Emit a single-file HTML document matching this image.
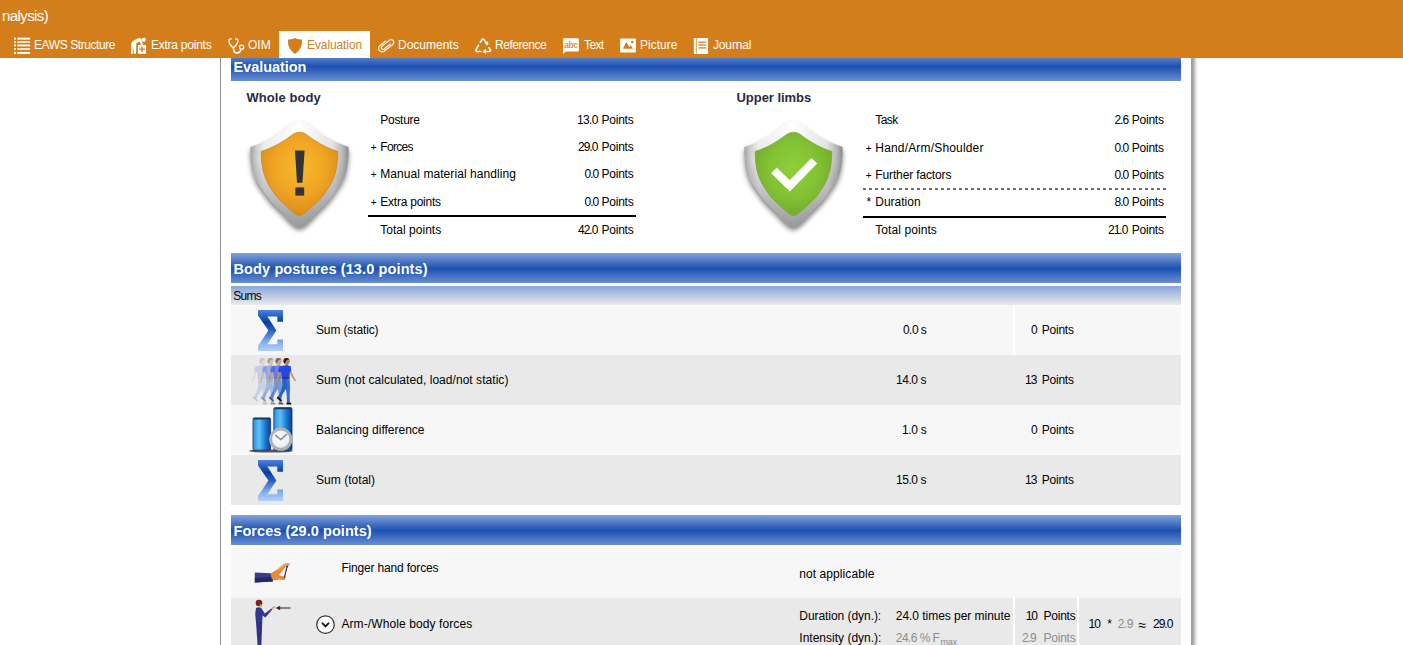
<!DOCTYPE html>
<html><head><meta charset="utf-8"><title>EAWS Evaluation</title>
<style>
html,body{margin:0;padding:0;background:#fff;}
body{width:1403px;height:645px;overflow:hidden;position:relative;font-family:"Liberation Sans", sans-serif;}
.t{position:absolute;white-space:pre;font-family:"Liberation Sans", sans-serif;}
.b{position:absolute;}
.hdr{position:absolute;left:231px;width:950px;background:linear-gradient(to bottom,#82a2da 0%,#1c50b2 52%,#6a8fd0 100%);}
.row{position:absolute;left:231px;width:950px;height:50px;}
svg{position:absolute;overflow:visible}
</style></head><body>
<!-- top orange bar -->
<div class="b" style="left:0;top:0;width:1403px;height:58px;background:#d47e1b"></div>
<div class="b" style="left:279px;top:31px;width:91px;height:27px;background:#fff"></div>
<!-- panel borders -->
<div class="b" style="left:220px;top:58px;width:1px;height:587px;background:#8e8e8e"></div>
<div class="b" style="left:1191px;top:58px;width:7px;height:587px;background:linear-gradient(to right,#9c9c9c 0%,#a6a6a6 30%,#d8d8d8 60%,#fff 100%)"></div>
<!-- headers -->
<div class="b" style="left:231px;top:58px;width:950px;height:23px;overflow:hidden"><div class="hdr" style="left:0;top:-7px;height:30px"></div></div>
<div class="hdr" style="top:253px;height:30px"></div>
<div class="hdr" style="top:515px;height:30px"></div>
<div class="b" style="left:231px;top:286px;width:950px;height:19px;background:linear-gradient(to bottom,#89a5d9,#eaeaea)"></div>
<!-- rows -->
<div class="row" style="top:305px;background:#f7f7f7"></div>
<div class="row" style="top:355px;background:#e9e9e9"></div>
<div class="row" style="top:405px;background:#f7f7f7"></div>
<div class="row" style="top:455px;background:#e9e9e9"></div>
<div class="row" style="top:548px;background:#f7f7f7"></div>
<div class="row" style="top:598px;height:47px;background:#e9e9e9"></div>
<div class="b" style="left:1013px;top:305px;width:2px;height:50px;background:#fff"></div>
<div class="b" style="left:1013px;top:598px;width:2px;height:47px;background:#fff"></div>
<div class="b" style="left:1077px;top:598px;width:2px;height:47px;background:#fff"></div>
<!-- eval lines -->
<div class="b" style="left:368px;top:215px;width:268px;height:2px;background:#000"></div>
<div class="b" style="left:863px;top:216px;width:303px;height:2px;background:#000"></div>
<div class="b" style="left:863px;top:188px;width:303px;height:2px;background:repeating-linear-gradient(to right,#6e6e6e 0,#6e6e6e 3px,transparent 3px,transparent 6px)"></div>
<!-- tab icons -->
<svg style="left:10px;top:34px" width="24" height="24" viewBox="0 0 24 24">
 <g fill="#fff"><rect x="4" y="3.7" width="2" height="1.9"/><rect x="4" y="10.5" width="2" height="1.9"/><rect x="4" y="17.9" width="2" height="2"/>
 <rect x="7.3" y="3.7" width="12.8" height="1.9"/><rect x="7.3" y="10.5" width="12.8" height="1.9"/><rect x="7.3" y="17.9" width="12.8" height="2"/></g>
 <g fill="#f8e3cb"><rect x="4" y="7" width="2" height="2"/><rect x="4" y="14" width="2" height="2"/><rect x="7.3" y="7" width="12.8" height="2"/><rect x="7.3" y="14" width="12.8" height="2"/></g>
</svg>
<svg style="left:126px;top:34px" width="24" height="24" viewBox="0 0 24 24">
 <circle cx="17.9" cy="5.8" r="2.1" fill="#fff"/>
 <path d="M5,19.8 L5.3,10 Q5.6,7.2 8,6.2 L13.2,4 Q14.8,3.6 15.3,5 L17,11 L15.3,11 L13.6,7.6 L10.3,9.3 L10,19.8 L8,19.8 L7.6,13 L7,19.8 Z" fill="#fff"/>
 <rect x="11.9" y="11" width="8.2" height="8.8" rx="0.8" fill="#fff"/>
 <path d="M13.2,14.5 h2 v-1.9 h1.6 v1.9 h2 v1.6 h-2 v1.9 h-1.6 v-1.9 h-2 Z" fill="#d8883a"/>
</svg>
<svg style="left:224px;top:34px" width="24" height="24" viewBox="0 0 24 24" fill="none" stroke="#fff" stroke-width="1.4" stroke-linecap="round">
 <path d="M7.4,4.9 Q4.6,4.6 4.9,7.2 Q5.4,11.2 9.3,13.8 Q13.4,10.8 13.9,6.8 Q14.1,4.6 11.6,4.9"/>
 <path d="M9.3,13.8 Q9.9,19.3 13.3,19 Q16.4,18.6 17,15.4"/>
 <circle cx="17.6" cy="13.2" r="2.1" stroke-width="1.3"/>
</svg>
<svg style="left:282px;top:34px" width="24" height="24" viewBox="0 0 24 24">
 <path d="M13,3.9 Q10,5.7 6,5.6 L6,9 Q6.5,15.5 13,19.9 Q19.5,15.5 20,9 L20,5.6 Q16,5.7 13,3.9 Z" fill="#d47e1b"/>
</svg>
<svg style="left:374px;top:34px" width="24" height="24" viewBox="0 0 24 24" fill="none" stroke="#fdf3e6" stroke-width="1.5" stroke-linecap="round">
 <g transform="translate(12.1,11.2) rotate(-38) scale(0.85)">
  <path d="M2.5,-4.2 L-5.8,-4.2 A4.2,4.2 0 0 0 -5.8,4.2 L6.6,4.2 A3.2,3.2 0 0 0 6.6,-2.2 L-4.6,-2.2 A2.1,2.1 0 0 0 -4.6,2 L4.8,2"/>
 </g>
</svg>
<svg style="left:471px;top:34px" width="24" height="24" viewBox="0 0 24 24" fill="none" stroke="#fff" stroke-width="1.6" stroke-linecap="round" stroke-linejoin="round">
 <path d="M9.3,8.3 L11,5.6 Q12,4.6 13,5.6 L15.8,9.8"/>
 <path d="M14.6,9.6 L16.8,11 L16.7,8.2 Z" fill="#fff" stroke-width="0.8"/>
 <path d="M7.6,11.2 L4.9,15.8 Q4.5,17.4 6,17.5 L10,17.5"/>
 <path d="M18,13.6 L19.4,16 Q19.9,17.4 18.4,17.5 L13.6,17.5"/>
 <path d="M14.2,15.8 L12.2,17.5 L14.2,19.2 Z" fill="#fff" stroke-width="0.8"/>
</svg>
<svg style="left:558px;top:34px" width="24" height="24" viewBox="0 0 24 24">
 <path d="M6,4.3 H19.9 Q20.9,4.3 20.9,5.3 V16.5 Q20.9,17.5 19.9,17.5 H7.8 L5.2,20.2 L5,5.3 Q5,4.3 6,4.3 Z" fill="#fff"/>
 <text x="12.9" y="13.6" font-family="Liberation Sans, sans-serif" font-size="8.4" font-weight="700" fill="#dc9040" text-anchor="middle" letter-spacing="-0.4">abc</text>
</svg>
<svg style="left:616px;top:34px" width="24" height="24" viewBox="0 0 24 24">
 <rect x="4.1" y="4.5" width="15.8" height="14.1" rx="1" fill="#fff"/>
 <path d="M6.8,14.7 L10.4,8 L13.3,13 L14.5,11 L17,14.7 Z" fill="#d47e1b"/>
 <circle cx="16.3" cy="8" r="1.3" fill="#d47e1b"/>
</svg>
<svg style="left:689px;top:34px" width="24" height="24" viewBox="0 0 24 24">
 <rect x="4.8" y="3.9" width="14.3" height="16" rx="1" fill="#fff"/>
 <rect x="7" y="3.9" width="0.9" height="16" fill="#e4a55e"/>
 <g fill="#e09a4b"><rect x="9.3" y="7.4" width="8" height="1.6"/><rect x="9.3" y="10.2" width="8" height="1.6"/><rect x="9.3" y="13.1" width="8" height="1.6"/></g>
</svg>
<!-- big shields -->
<svg width="0" height="0" style="left:0;top:0">
 <defs>
  <linearGradient id="rim" x1="0" y1="0" x2="1" y2="1">
   <stop offset="0" stop-color="#ffffff"/><stop offset="0.35" stop-color="#ededed"/><stop offset="0.7" stop-color="#c9c9c9"/><stop offset="1" stop-color="#9a9a9a"/>
  </linearGradient>
  <linearGradient id="rimedge" x1="0" y1="0" x2="1" y2="0">
   <stop offset="0" stop-color="#a2a2a2"/><stop offset="0.06" stop-color="#cdcdcd"/><stop offset="0.14" stop-color="#ececec"/><stop offset="0.5" stop-color="#ffffff"/><stop offset="0.84" stop-color="#e2e2e2"/><stop offset="0.94" stop-color="#b6b6b6"/><stop offset="1" stop-color="#8a8a8a"/>
  </linearGradient>
  <radialGradient id="gold" cx="0.5" cy="0.42" r="0.6">
   <stop offset="0" stop-color="#f8b92c"/><stop offset="0.55" stop-color="#f0a524"/><stop offset="1" stop-color="#d98a18"/>
  </radialGradient>
  <radialGradient id="green" cx="0.5" cy="0.45" r="0.6">
   <stop offset="0" stop-color="#8fd03a"/><stop offset="0.55" stop-color="#82c234"/><stop offset="1" stop-color="#6fa82b"/>
  </radialGradient>
  <filter id="sh" x="-30%" y="-30%" width="160%" height="160%"><feGaussianBlur stdDeviation="2.6"/></filter>
  <linearGradient id="sig" x1="0" y1="0" x2="0" y2="1">
   <stop offset="0" stop-color="#4d84de"/><stop offset="0.12" stop-color="#2d66c8"/><stop offset="0.3" stop-color="#0b3d9e"/><stop offset="0.5" stop-color="#2a5fc0"/><stop offset="0.75" stop-color="#7aa7ec"/><stop offset="1" stop-color="#b3d0fa"/>
  </linearGradient>
  <linearGradient id="bar" x1="0" y1="0" x2="1" y2="0">
   <stop offset="0" stop-color="#2f8fdc"/><stop offset="0.35" stop-color="#5fc0f6"/><stop offset="0.7" stop-color="#1a78d0"/><stop offset="1" stop-color="#0a3f98"/>
  </linearGradient>
  <radialGradient id="clk" cx="0.45" cy="0.4" r="0.6"><stop offset="0" stop-color="#ffffff"/><stop offset="0.8" stop-color="#eef0f3"/><stop offset="1" stop-color="#d5d8dc"/></radialGradient>
  <linearGradient id="rimv" x1="0" y1="0" x2="0" y2="1">
   <stop offset="0" stop-color="#000" stop-opacity="0"/><stop offset="0.38" stop-color="#000" stop-opacity="0"/><stop offset="1" stop-color="#000" stop-opacity="0.4"/>
  </linearGradient>
  <g id="shield">
   <path d="M49.5,0.3 C45,0.3 41,3 37,6 C30,12 18,20 0.4,25.9 C0.2,33 1,41 2.4,48.4 C4.5,57 8,63 12.6,68.9 C17,76 23,83 30,89.4 C35,94 44,105.7 49.5,105.7 C55,105.7 64,94 69,89.4 C76,83 82,76 86.4,68.9 C91,63 94.5,57 96.6,48.4 C98,41 98.8,33 98.6,25.9 C81,20 69,12 62,6 C58,3 54,0.3 49.5,0.3 Z" fill="#000" opacity="0.5" filter="url(#sh)" transform="translate(0,3.5)"/>
   <path d="M49.5,0.3 C45,0.3 41,3 37,6 C30,12 18,20 0.4,25.9 C0.2,33 1,41 2.4,48.4 C4.5,57 8,63 12.6,68.9 C17,76 23,83 30,89.4 C35,94 44,105.7 49.5,105.7 C55,105.7 64,94 69,89.4 C76,83 82,76 86.4,68.9 C91,63 94.5,57 96.6,48.4 C98,41 98.8,33 98.6,25.9 C81,20 69,12 62,6 C58,3 54,0.3 49.5,0.3 Z" fill="url(#rimedge)"/>
   <path d="M49.5,0.3 C45,0.3 41,3 37,6 C30,12 18,20 0.4,25.9 C0.2,33 1,41 2.4,48.4 C4.5,57 8,63 12.6,68.9 C17,76 23,83 30,89.4 C35,94 44,105.7 49.5,105.7 C55,105.7 64,94 69,89.4 C76,83 82,76 86.4,68.9 C91,63 94.5,57 96.6,48.4 C98,41 98.8,33 98.6,25.9 C81,20 69,12 62,6 C58,3 54,0.3 49.5,0.3 Z" fill="url(#rimv)"/>
  </g>
  <path id="shin" d="M49.5,11.2 C45.5,11.2 42.5,13.5 38.5,16.5 C31.5,21.5 22.5,27 11.2,30.4 C11.2,37 11.7,43 12.8,48.4 C14.7,57 17.7,63 22,68.9 C25.2,74 29.2,79 34.3,83.2 C38.5,87 45.5,94.5 49.5,94.5 C53.5,94.5 60.5,87 64.7,83.2 C69.8,79 73.8,74 77,68.9 C81.3,63 84.3,57 86.2,48.4 C87.3,43 87.8,37 87.8,30.4 C76.5,27 67.5,21.5 60.5,16.5 C56.5,13.5 53.5,11.2 49.5,11.2 Z"/>
  <path id="sigma" d="M0,0 H25 V11.8 H19.3 V6.6 H9.4 L18.4,20.5 L9.4,34.2 H19.3 V29.4 H25 V41 H0 V36 L10.4,20.5 L0,5.4 Z"/>
 </defs>
</svg>
<svg style="left:250px;top:121px" width="99" height="112" viewBox="0 0 99 112">
 <use href="#shield"/><use href="#shin" fill="url(#gold)" stroke="#c98a2a" stroke-width="0.8"/>
 <path d="M45,29.6 H54.6 L52.5,61.7 H47 Z" fill="#333"/><rect x="45.4" y="66.4" width="8.8" height="8.2" fill="#333"/>
</svg>
<svg style="left:744px;top:121px" width="99" height="112" viewBox="0 0 99 112">
 <use href="#shield"/><use href="#shin" fill="url(#green)" stroke="#79a83e" stroke-width="0.8"/>
 <path d="M30,49.4 L45.8,64.8 L70.3,39.8" fill="none" stroke="#fff" stroke-width="8"/>
</svg>
<!-- sigma icons -->
<svg style="left:258px;top:310px" width="25" height="41" viewBox="0 0 25 41"><use href="#sigma" fill="url(#sig)"/></svg>
<svg style="left:258px;top:460px" width="25" height="41" viewBox="0 0 25 41"><use href="#sigma" fill="url(#sig)"/></svg>
<!-- walking men -->
<svg style="left:246px;top:353px" width="56" height="52" viewBox="0 0 56 52">
 <defs><g id="man">
  <path d="M-1.5,17.2 L3.1,17.2 L3.7,26 L3.3,34 L3.5,41.6 L0.6,41.6 L0.3,33 L-0.8,26 Z" fill="#2f6fd6"/>
  <path d="M-4.4,17.2 L0.2,17.2 L0.6,26 L-3.4,32.2 L-6.2,37.8 L-8.8,36 L-5.6,30.2 L-4.2,25 Z" fill="#2a5fc4"/>
  <path d="M-7.4,10.4 L-9.6,17 L-10.5,21.4 L-9.3,21.8 L-7.8,17 L-6,11 Z" fill="#c88f63"/>
  <path d="M3.6,10.2 L4.8,10 L7.2,15.4 L9.6,19.2 L8.6,20.2 L5.8,16.4 L3.8,12.2 Z" fill="#c88f63"/>
  <rect x="-0.8" y="2.4" width="2.6" height="3" fill="#b07a52"/>
  <path d="M-7,5.2 L-1.2,4 L4.3,4.8 L4.9,10.2 L3.5,10.5 L3.1,17 L-4.5,17 L-5.3,10.6 L-7.3,11.4 L-8.2,9 Z" fill="#2349dc"/>
  <rect x="-4.5" y="16.4" width="7.6" height="1.1" fill="#1a2258"/>
  <circle cx="0.2" cy="0" r="3.1" fill="#b9835a"/>
  <path d="M-2.9,0.6 Q-3.4,-3.4 0.2,-3.3 Q2.6,-3.2 3,-1.6 Q0.4,-2 -0.6,0 Q-1,1.6 -1.6,2.4 Q-2.6,2 -2.9,0.6 Z" fill="#2a1a14"/>
  <path d="M0.2,41.3 L3.7,41.3 L5,42.4 L5,43.3 L0.2,43.3 Z" fill="#0a0a0a"/>
  <path d="M-9.2,35.4 L-6,37.6 L-4.3,39.8 L-5.4,40.2 L-9.5,37 Z" fill="#0a0a0a"/>
 </g></defs>
 <use href="#man" x="16.4" y="8.2" opacity="0.17"/><use href="#man" x="24.4" y="8.2" opacity="0.36"/><use href="#man" x="32.4" y="8.2" opacity="0.62"/><use href="#man" x="40.4" y="8.2"/>
</svg>
<!-- balance icon -->
<svg style="left:248px;top:405px" width="50" height="50" viewBox="0 0 50 50">
 <ellipse cx="23" cy="46" rx="22" ry="1.6" fill="#222" opacity="0.75"/>
 <rect x="25.8" y="2.8" width="18.2" height="42.5" rx="1.5" fill="url(#bar)" stroke="#14305e" stroke-width="0.8"/>
 <rect x="5" y="13" width="17.6" height="32.2" rx="1.5" fill="url(#bar)" stroke="#14305e" stroke-width="0.8"/>
 <rect x="25.8" y="2.6" width="18.2" height="1.6" rx="0.8" fill="#173766"/><rect x="5" y="12.8" width="17.6" height="1.6" rx="0.8" fill="#173766"/>
 <circle cx="32.8" cy="34.2" r="11.6" fill="#aeb3b9"/>
 <circle cx="32.8" cy="34.2" r="9.2" fill="url(#clk)" stroke="#8e949b" stroke-width="0.6"/>
 <path d="M32.8,34.6 L27.6,30.4 M32.8,34.6 L38.6,29.4" stroke="#8a8f96" stroke-width="1.5" fill="none" stroke-linecap="round"/>
</svg>
<!-- hand icon -->
<svg style="left:250px;top:558px" width="46" height="30" viewBox="0 0 46 30">
 <path d="M4.8,14.6 L20.5,15.2 Q23,16 23.2,19.5 L22.8,23.6 L4.8,24.4 Z" fill="#3b3c8e"/>
 <path d="M4.8,20 L22.9,19 L22.8,23.6 L4.8,24.4 Z" fill="#26276a"/>
 <path d="M20.6,15.4 L27,11.4 L33,6.4 Q36.5,4.6 39.8,5.6 L39.4,7.4 L36.4,7.8 L33.4,11.4 L29,17 L33.6,18.8 L35.4,20.6 L34.6,22 L29,21.4 L24.4,22.6 L21.8,21 Z" fill="#e48b3c"/>
 <path d="M27,11.4 L33,6.4 Q36.5,4.6 39.8,5.6 L39.4,6.6 Q36,6 33.4,8 L28,12.6 Z" fill="#f3ae68"/>
 <path d="M37.2,8.4 L34.4,19.2" stroke="#222" stroke-width="1.1" fill="none"/>
 <circle cx="37.2" cy="8.6" r="1" fill="#444"/><circle cx="34.5" cy="19" r="1" fill="#444"/>
</svg>
<!-- person push icon -->
<svg style="left:250px;top:598px" width="46" height="47" viewBox="0 0 46 47">
 <circle cx="9" cy="5" r="3.3" fill="#7a2418"/>
 <path d="M9.8,6 Q12.2,6.4 11.6,9 L10.4,9.6 Z" fill="#d9a070"/>
 <path d="M6,10 Q8.6,8.6 11.2,10 L14.8,15.6 L21.4,10.4 L22.4,11.4 L15.4,19.4 L12.6,17.6 L12.2,24.5 H6 L5.2,16 Z" fill="#34378c"/>
 <path d="M6,24 H12.2 L11.4,47 H7.6 Z" fill="#2f3285"/>
 <path d="M21.2,10 L24.6,8 L25.4,9.6 L22.4,11.6 Z" fill="#e8a070"/>
 <path d="M29.4,10 H40.4" stroke="#3a2a2a" stroke-width="1.1"/><path d="M25.6,10 L30.2,7.8 V12.2 Z" fill="#3a2a2a"/>
</svg>
<!-- chevron circle -->
<svg style="left:315px;top:614px" width="21" height="21" viewBox="0 0 21 21">
 <circle cx="10.5" cy="10.6" r="8.8" fill="#fff" stroke="#333" stroke-width="1.25"/>
 <path d="M7.5,9.4 L10.5,12.4 L13.5,9.4" fill="none" stroke="#1a1a1a" stroke-width="2" stroke-linecap="round" stroke-linejoin="miter"/>
</svg>

<span class="t" id="t0" style="left:1.90px;top:4.90px;font-size:15px;line-height:21px;font-weight:400;color:#fff;letter-spacing:-0.566px">nalysis)</span>
<span class="t" id="t1" style="left:34.00px;top:37.44px;font-size:12px;line-height:17px;font-weight:400;color:#fff;letter-spacing:-0.415px">EAWS Structure</span>
<span class="t" id="t2" style="left:151.00px;top:37.44px;font-size:12px;line-height:17px;font-weight:400;color:#fff;letter-spacing:-0.245px">Extra points</span>
<span class="t" id="t3" style="left:248.00px;top:37.44px;font-size:12px;line-height:17px;font-weight:400;color:#fff;letter-spacing:0.000px">OIM</span>
<span class="t" id="t4" style="left:307.00px;top:37.44px;font-size:12px;line-height:17px;font-weight:400;color:#d47e1b;letter-spacing:-0.100px">Evaluation</span>
<span class="t" id="t5" style="left:398.00px;top:37.44px;font-size:12px;line-height:17px;font-weight:400;color:#fff;letter-spacing:0.000px">Documents</span>
<span class="t" id="t6" style="left:495.00px;top:37.44px;font-size:12px;line-height:17px;font-weight:400;color:#fff;letter-spacing:-0.450px">Reference</span>
<span class="t" id="t7" style="left:584.00px;top:37.44px;font-size:12px;line-height:17px;font-weight:400;color:#fff;letter-spacing:-0.600px">Text</span>
<span class="t" id="t8" style="left:640.00px;top:37.44px;font-size:12px;line-height:17px;font-weight:400;color:#fff;letter-spacing:0.000px">Picture</span>
<span class="t" id="t9" style="left:713.00px;top:37.44px;font-size:12px;line-height:17px;font-weight:400;color:#fff;letter-spacing:-0.150px">Journal</span>
<span class="t" id="t10" style="left:233.50px;top:56.78px;font-size:14.5px;line-height:20px;font-weight:700;color:#fff;letter-spacing:-0.050px">Evaluation</span>
<span class="t" id="t11" style="left:233.50px;top:259.28px;font-size:14.5px;line-height:20px;font-weight:700;color:#fff;letter-spacing:0.121px">Body postures (13.0 points)</span>
<span class="t" id="t12" style="left:233.50px;top:521.38px;font-size:14.5px;line-height:20px;font-weight:700;color:#fff;letter-spacing:0.062px">Forces (29.0 points)</span>
<span class="t" id="t13" style="left:246.50px;top:89.10px;font-size:13px;line-height:18px;font-weight:700;color:#2b2b3f;letter-spacing:0.050px">Whole body</span>
<span class="t" id="t14" style="left:736.50px;top:89.10px;font-size:13px;line-height:18px;font-weight:700;color:#2b2b3f;letter-spacing:-0.045px">Upper limbs</span>
<span class="t" id="t15" style="left:380.30px;top:112.14px;font-size:12px;line-height:17px;font-weight:400;color:#000;letter-spacing:-0.285px">Posture</span>
<span class="t" id="t16" style="left:380.30px;top:139.14px;font-size:12px;line-height:17px;font-weight:400;color:#000;letter-spacing:-0.702px">Forces</span>
<span class="t" id="t17" style="left:380.30px;top:166.14px;font-size:12px;line-height:17px;font-weight:400;color:#000;letter-spacing:0.063px">Manual material handling</span>
<span class="t" id="t18" style="left:380.30px;top:194.14px;font-size:12px;line-height:17px;font-weight:400;color:#000;letter-spacing:-0.237px">Extra points</span>
<span class="t" id="t19" style="left:380.30px;top:222.14px;font-size:12px;line-height:17px;font-weight:400;color:#000;letter-spacing:0.016px">Total points</span>
<span class="t" id="t20" style="left:370.70px;top:140.94px;font-size:10px;line-height:14px;font-weight:400;color:#000;letter-spacing:0.000px">+</span>
<span class="t" id="t21" style="left:370.70px;top:167.94px;font-size:10px;line-height:14px;font-weight:400;color:#000;letter-spacing:0.000px">+</span>
<span class="t" id="t22" style="left:370.70px;top:195.94px;font-size:10px;line-height:14px;font-weight:400;color:#000;letter-spacing:0.000px">+</span>
<span class="t" id="t23" style="left:577.00px;top:112.14px;font-size:12px;line-height:17px;font-weight:400;color:#000;letter-spacing:-0.660px">13.0</span>
<span class="t" id="t24" style="left:601.60px;top:112.14px;font-size:12px;line-height:17px;font-weight:400;color:#000;letter-spacing:-0.252px">Points</span>
<span class="t" id="t25" style="left:578.00px;top:139.14px;font-size:12px;line-height:17px;font-weight:400;color:#000;letter-spacing:-1.000px">29.0</span>
<span class="t" id="t26" style="left:601.60px;top:139.14px;font-size:12px;line-height:17px;font-weight:400;color:#000;letter-spacing:-0.252px">Points</span>
<span class="t" id="t27" style="left:584.50px;top:166.14px;font-size:12px;line-height:17px;font-weight:400;color:#000;letter-spacing:-1.000px">0.0</span>
<span class="t" id="t28" style="left:601.60px;top:166.14px;font-size:12px;line-height:17px;font-weight:400;color:#000;letter-spacing:-0.252px">Points</span>
<span class="t" id="t29" style="left:584.50px;top:194.14px;font-size:12px;line-height:17px;font-weight:400;color:#000;letter-spacing:-1.000px">0.0</span>
<span class="t" id="t30" style="left:601.60px;top:194.14px;font-size:12px;line-height:17px;font-weight:400;color:#000;letter-spacing:-0.252px">Points</span>
<span class="t" id="t31" style="left:578.00px;top:222.14px;font-size:12px;line-height:17px;font-weight:400;color:#000;letter-spacing:-1.000px">42.0</span>
<span class="t" id="t32" style="left:601.60px;top:222.14px;font-size:12px;line-height:17px;font-weight:400;color:#000;letter-spacing:-0.252px">Points</span>
<span class="t" id="t33" style="left:875.30px;top:112.14px;font-size:12px;line-height:17px;font-weight:400;color:#000;letter-spacing:-0.570px">Task</span>
<span class="t" id="t34" style="left:875.30px;top:140.14px;font-size:12px;line-height:17px;font-weight:400;color:#000;letter-spacing:0.174px">Hand/Arm/Shoulder</span>
<span class="t" id="t35" style="left:875.30px;top:167.14px;font-size:12px;line-height:17px;font-weight:400;color:#000;letter-spacing:-0.135px">Further factors</span>
<span class="t" id="t36" style="left:875.30px;top:194.14px;font-size:12px;line-height:17px;font-weight:400;color:#000;letter-spacing:-0.013px">Duration</span>
<span class="t" id="t37" style="left:875.30px;top:222.14px;font-size:12px;line-height:17px;font-weight:400;color:#000;letter-spacing:0.074px">Total points</span>
<span class="t" id="t38" style="left:865.70px;top:142.03px;font-size:10px;line-height:14px;font-weight:400;color:#000;letter-spacing:0.000px">+</span>
<span class="t" id="t39" style="left:865.70px;top:169.03px;font-size:10px;line-height:14px;font-weight:400;color:#000;letter-spacing:0.000px">+</span>
<span class="t" id="t40" style="left:866.50px;top:194.14px;font-size:12px;line-height:17px;font-weight:400;color:#000;letter-spacing:0.000px">*</span>
<span class="t" id="t41" style="left:1114.50px;top:112.14px;font-size:12px;line-height:17px;font-weight:400;color:#000;letter-spacing:-1.000px">2.6</span>
<span class="t" id="t42" style="left:1131.80px;top:112.14px;font-size:12px;line-height:17px;font-weight:400;color:#000;letter-spacing:-0.252px">Points</span>
<span class="t" id="t43" style="left:1114.50px;top:140.14px;font-size:12px;line-height:17px;font-weight:400;color:#000;letter-spacing:-1.000px">0.0</span>
<span class="t" id="t44" style="left:1131.80px;top:140.14px;font-size:12px;line-height:17px;font-weight:400;color:#000;letter-spacing:-0.252px">Points</span>
<span class="t" id="t45" style="left:1114.50px;top:167.14px;font-size:12px;line-height:17px;font-weight:400;color:#000;letter-spacing:-1.000px">0.0</span>
<span class="t" id="t46" style="left:1131.80px;top:167.14px;font-size:12px;line-height:17px;font-weight:400;color:#000;letter-spacing:-0.252px">Points</span>
<span class="t" id="t47" style="left:1114.50px;top:194.14px;font-size:12px;line-height:17px;font-weight:400;color:#000;letter-spacing:-1.000px">8.0</span>
<span class="t" id="t48" style="left:1131.80px;top:194.14px;font-size:12px;line-height:17px;font-weight:400;color:#000;letter-spacing:-0.252px">Points</span>
<span class="t" id="t49" style="left:1108.00px;top:222.14px;font-size:12px;line-height:17px;font-weight:400;color:#000;letter-spacing:-1.000px">21.0</span>
<span class="t" id="t50" style="left:1131.80px;top:222.14px;font-size:12px;line-height:17px;font-weight:400;color:#000;letter-spacing:-0.252px">Points</span>
<span class="t" id="t51" style="left:233.30px;top:287.64px;font-size:12px;line-height:17px;font-weight:400;color:#000;letter-spacing:-0.720px">Sums</span>
<span class="t" id="t52" style="left:316.00px;top:321.74px;font-size:12px;line-height:17px;font-weight:400;color:#000;letter-spacing:-0.131px">Sum (static)</span>
<span class="t" id="t53" style="left:316.00px;top:371.74px;font-size:12px;line-height:17px;font-weight:400;color:#000;letter-spacing:0.045px">Sum (not calculated, load/not static)</span>
<span class="t" id="t54" style="left:316.00px;top:421.74px;font-size:12px;line-height:17px;font-weight:400;color:#000;letter-spacing:0.000px">Balancing difference</span>
<span class="t" id="t55" style="left:316.00px;top:471.74px;font-size:12px;line-height:17px;font-weight:400;color:#000;letter-spacing:0.036px">Sum (total)</span>
<span class="t" id="t56" style="left:903.00px;top:321.74px;font-size:12px;line-height:17px;font-weight:400;color:#000;letter-spacing:-0.562px">0.0 s</span>
<span class="t" id="t57" style="left:896.00px;top:371.74px;font-size:12px;line-height:17px;font-weight:400;color:#000;letter-spacing:-0.450px">14.0 s</span>
<span class="t" id="t58" style="left:902.00px;top:421.74px;font-size:12px;line-height:17px;font-weight:400;color:#000;letter-spacing:-0.338px">1.0 s</span>
<span class="t" id="t59" style="left:896.00px;top:471.74px;font-size:12px;line-height:17px;font-weight:400;color:#000;letter-spacing:-0.450px">15.0 s</span>
<span class="t" id="t60" style="left:1031.00px;top:321.74px;font-size:12px;line-height:17px;font-weight:400;color:#000;letter-spacing:0.000px">0</span>
<span class="t" id="t61" style="left:1041.80px;top:321.74px;font-size:12px;line-height:17px;font-weight:400;color:#000;letter-spacing:-0.252px">Points</span>
<span class="t" id="t62" style="left:1025.00px;top:371.74px;font-size:12px;line-height:17px;font-weight:400;color:#000;letter-spacing:-1.000px">13</span>
<span class="t" id="t63" style="left:1041.80px;top:371.74px;font-size:12px;line-height:17px;font-weight:400;color:#000;letter-spacing:-0.252px">Points</span>
<span class="t" id="t64" style="left:1031.00px;top:421.74px;font-size:12px;line-height:17px;font-weight:400;color:#000;letter-spacing:0.000px">0</span>
<span class="t" id="t65" style="left:1041.80px;top:421.74px;font-size:12px;line-height:17px;font-weight:400;color:#000;letter-spacing:-0.252px">Points</span>
<span class="t" id="t66" style="left:1025.00px;top:471.74px;font-size:12px;line-height:17px;font-weight:400;color:#000;letter-spacing:-1.000px">13</span>
<span class="t" id="t67" style="left:1041.80px;top:471.74px;font-size:12px;line-height:17px;font-weight:400;color:#000;letter-spacing:-0.252px">Points</span>
<span class="t" id="t68" style="left:341.40px;top:559.94px;font-size:12px;line-height:17px;font-weight:400;color:#000;letter-spacing:-0.175px">Finger hand forces</span>
<span class="t" id="t69" style="left:341.40px;top:616.14px;font-size:12px;line-height:17px;font-weight:400;color:#000;letter-spacing:0.099px">Arm-/Whole body forces</span>
<span class="t" id="t70" style="left:799.30px;top:566.14px;font-size:12px;line-height:17px;font-weight:400;color:#000;letter-spacing:0.076px">not applicable</span>
<span class="t" id="t71" style="left:799.30px;top:608.14px;font-size:12px;line-height:17px;font-weight:400;color:#000;letter-spacing:-0.054px">Duration (dyn.):</span>
<span class="t" id="t72" style="left:895.80px;top:608.14px;font-size:12px;line-height:17px;font-weight:400;color:#000;letter-spacing:-0.040px">24.0 times per minute</span>
<span class="t" id="t73" style="left:799.30px;top:630.14px;font-size:12px;line-height:17px;font-weight:400;color:#000;letter-spacing:0.006px">Intensity (dyn.):</span>
<span class="t" id="t74" style="left:895.80px;top:630.14px;font-size:12px;line-height:17px;font-weight:400;color:#8c8c8c;letter-spacing:-0.566px">24.6 % F</span>
<span class="t" id="t75" style="left:940.50px;top:635.68px;font-size:9px;line-height:13px;font-weight:400;color:#8c8c8c;letter-spacing:-0.225px">max</span>
<span class="t" id="t76" style="left:1025.70px;top:608.14px;font-size:12px;line-height:17px;font-weight:400;color:#000;letter-spacing:-1.000px">10</span>
<span class="t" id="t77" style="left:1043.60px;top:608.14px;font-size:12px;line-height:17px;font-weight:400;color:#000;letter-spacing:-0.252px">Points</span>
<span class="t" id="t78" style="left:1022.00px;top:630.14px;font-size:12px;line-height:17px;font-weight:400;color:#8c8c8c;letter-spacing:-1.000px">2.9</span>
<span class="t" id="t79" style="left:1043.60px;top:630.14px;font-size:12px;line-height:17px;font-weight:400;color:#8c8c8c;letter-spacing:-0.252px">Points</span>
<span class="t" id="t80" style="left:1088.50px;top:615.84px;font-size:12px;line-height:17px;font-weight:400;color:#000;letter-spacing:-1.000px">10</span>
<span class="t" id="t81" style="left:1107.30px;top:615.84px;font-size:12px;line-height:17px;font-weight:400;color:#000;letter-spacing:0.000px">*</span>
<span class="t" id="t82" style="left:1117.70px;top:615.84px;font-size:12px;line-height:17px;font-weight:400;color:#8c8c8c;letter-spacing:-0.495px">2.9</span>
<span class="t" id="t83" style="left:1138.60px;top:614.95px;font-size:14px;line-height:20px;font-weight:400;color:#000;letter-spacing:0.000px">≈</span>
<span class="t" id="t84" style="left:1153.00px;top:615.84px;font-size:12px;line-height:17px;font-weight:400;color:#000;letter-spacing:-1.000px">29.0</span>
</body></html>
